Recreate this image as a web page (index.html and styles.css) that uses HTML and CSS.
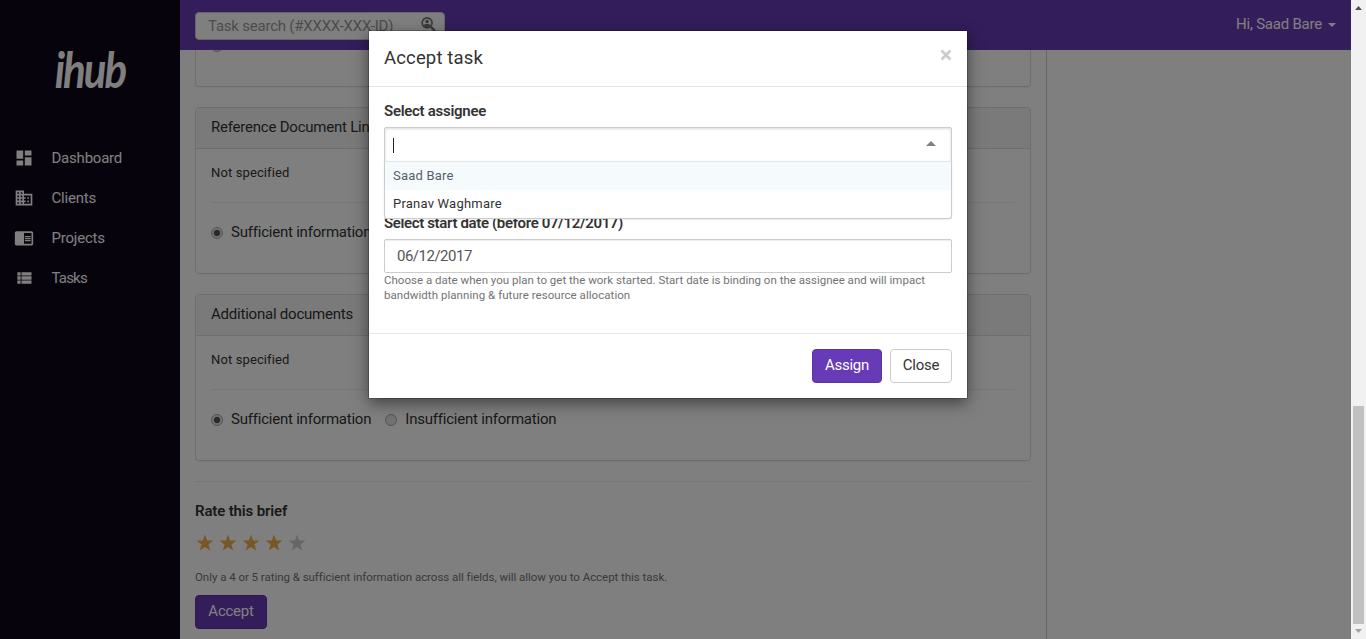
FILE: index.html
```html
<!DOCTYPE html>
<html lang="en">
<head>
<meta charset="utf-8">
<title>ihub</title>
<link rel="stylesheet" href="styles.css">
</head>
<body>
<div class="app">
  <aside class="sidebar">
    <div class="logo">ihub</div>
    <nav class="menu">
      <a class="menu-item"><svg viewBox="0 0 24 24"><path d="M3 13h8V3H3v10zm0 8h8v-6H3v6zm10 0h8V11h-8v10zm0-18v6h8V3h-8z"/></svg><span>Dashboard</span></a>
      <a class="menu-item"><svg viewBox="0 0 24 24"><path d="M12 7V3H2v18h20V7H12zM6 19H4v-2h2v2zm0-4H4v-2h2v2zm0-4H4V9h2v2zm0-4H4V5h2v2zm4 12H8v-2h2v2zm0-4H8v-2h2v2zm0-4H8V9h2v2zm0-4H8V5h2v2zm10 12h-8v-2h2v-2h-2v-2h2v-2h-2V9h8v10zm-2-8h-2v2h2v-2zm0 4h-2v2h2v-2z"/></svg><span>Clients</span></a>
      <a class="menu-item"><svg viewBox="0 0 24 24"><path d="M13 12h7v1.5h-7zm0-2.5h7V11h-7zm0 5h7V16h-7zM21 4H3c-1.1 0-2 .9-2 2v13c0 1.1.9 2 2 2h18c1.1 0 2-.9 2-2V6c0-1.1-.9-2-2-2zm0 15h-9V6h9v13z"/></svg><span>Projects</span></a>
      <a class="menu-item"><svg viewBox="0 0 24 24"><path d="M4 14h4v-4H4v4zm0 5h4v-4H4v4zM4 9h4V5H4v4zm5 5h12v-4H9v4zm0 5h12v-4H9v4zM9 5v4h12V5H9z"/></svg><span class="tight">Tasks</span></a>
    </nav>
  </aside>
  <div class="page">
    <header class="navbar">
      <div class="search"><span class="placeholder">Task search (#XXXX-XXX-ID)</span>
        <svg class="search-icon" viewBox="0 0 16 16"><circle cx="6.500" cy="6.200" r="5.300" fill="none" stroke="#777" stroke-width="1.800"/><path d="M10.500 10.500l4.300 4.200" stroke="#777" stroke-width="2.600"/><circle cx="6.500" cy="4.800" r="1.900" fill="#777"/><path d="M3 9.500c0-3 7-3 7 0l-2 1.500H5z" fill="#777"/></svg>
      </div>
      <div class="user"><span>Hi, Saad Bare</span><i class="caret"></i></div>
    </header>
    <main class="content">
      <div class="brief">
        <section class="panel panel-tail"><i class="radio"></i></section>
        <section class="panel">
          <h2 class="panel-title">Reference Document Links</h2>
          <div class="panel-body">
            <p class="value">Not specified</p>
            <div class="choices"><i class="radio checked"></i><span class="choice-label">Sufficient information</span><i class="radio"></i><span class="choice-label">Insufficient information</span></div>
          </div>
        </section>
        <section class="panel">
          <h2 class="panel-title">Additional documents</h2>
          <div class="panel-body">
            <p class="value">Not specified</p>
            <div class="choices"><i class="radio checked"></i><span class="choice-label">Sufficient information</span><i class="radio"></i><span class="choice-label">Insufficient information</span></div>
          </div>
        </section>
        <section class="rating">
          <h3 class="rate-title">Rate this brief</h3>
          <div class="stars">
            <svg viewBox="0 0 18 18"><path d="M9 .5l2.100 6.100h6.400l-5.100 3.800 1.900 6.200L9 12.900l-5.300 3.700 1.900-6.200L.5 6.600h6.400z"/></svg>
            <svg viewBox="0 0 18 18"><path d="M9 .5l2.100 6.100h6.400l-5.100 3.800 1.900 6.200L9 12.900l-5.300 3.700 1.900-6.200L.5 6.600h6.400z"/></svg>
            <svg viewBox="0 0 18 18"><path d="M9 .5l2.100 6.100h6.400l-5.100 3.800 1.900 6.200L9 12.900l-5.300 3.700 1.900-6.200L.5 6.600h6.400z"/></svg>
            <svg viewBox="0 0 18 18"><path d="M9 .5l2.100 6.100h6.400l-5.100 3.800 1.900 6.200L9 12.900l-5.300 3.700 1.900-6.200L.5 6.600h6.400z"/></svg>
            <svg class="off" viewBox="0 0 18 18"><path d="M9 .5l2.100 6.100h6.400l-5.100 3.800 1.900 6.200L9 12.900l-5.300 3.700 1.900-6.200L.5 6.600h6.400z"/></svg>
          </div>
          <p class="rate-note">Only a 4 or 5 rating &amp; sufficient information across all fields, will allow you to Accept this task.</p>
          <button class="btn btn-primary btn-accept">Accept</button>
        </section>
      </div>
    </main>
  </div>
  <div class="scrollbar">
    <svg class="arrow" viewBox="0 0 15 15"><path d="M4 10h7L7.500 6z" fill="#505050"/></svg>
    <div class="thumb"></div>
    <svg class="arrow" viewBox="0 0 15 15"><path d="M4 5h7L7.500 9z" fill="#a3a3a3"/></svg>
  </div>
</div>
<div class="backdrop">
  <div class="modal">
    <div class="modal-header"><h1 class="modal-title">Accept task</h1>
      <svg class="close" viewBox="0 0 12 12"><path d="M1.500 1.500l9 9M10.500 1.500l-9 9" stroke="#ccc" stroke-width="2.800"/></svg>
    </div>
    <div class="modal-body">
      <label class="label">Select assignee</label>
      <div class="select"><i class="cursor"></i><i class="select-arrow"></i>
        <div class="options"><div class="option focused">Saad Bare</div><div class="option">Pranav Waghmare</div></div>
      </div>
      <label class="label label-date">Select start date (before 07/12/2017)</label>
      <div class="input">06/12/2017</div>
      <p class="help">Choose a date when you plan to get the work started. Start date is binding on the assignee and will impact<br><span class="help-end">bandwidth planning &amp; future resource allocation</span></p>
    </div>
    <div class="modal-footer"><button class="btn btn-primary btn-assign">Assign</button><button class="btn btn-close">Close</button></div>
  </div>
</div>
</body>
</html>
```
FILE: styles.css
```css
* { box-sizing: border-box; }
body { margin: 0; overflow: hidden; font-family: Roboto, "Liberation Sans", sans-serif; font-size: 15px; line-height: 20px; letter-spacing: -.22px; color: #333; background: #fff; }
h1, h2, h3, p { margin: 0; font-weight: 400; }
.app { display: flex; height: 639px; }

.sidebar { width: 180px; background: #0e061a; color: #fff; }
.logo { height: 138px; padding-top: 48px; text-align: center; font: italic 700 42px/42px Lato, sans-serif; letter-spacing: -2px; transform: scaleY(1.18); transform-origin: 50% 69px; }
.menu-item { display: flex; align-items: center; height: 40px; padding-left: 14px; }
.menu-item svg { width: 20px; height: 20px; margin-right: 17.500px; fill: #fff; }
.tight { letter-spacing: -.8px; }

.page { flex: 1; display: flex; flex-direction: column; }
.navbar { display: flex; justify-content: space-between; height: 50px; padding: 12px 15px; background: #673ab7; color: #fff; }
.search { display: flex; align-items: center; justify-content: space-between; width: 250px; height: 28px; padding: 0 8px 0 12px; border: 1px solid #ccc; border-radius: 4px; background: #fff; color: #999; }
.search-icon { width: 15px; height: 15px; margin-top: -3px; }
.user { display: flex; align-items: center; height: 24px; }
.caret { margin-left: 6px; border: 4px solid transparent; border-top-color: #fff; border-bottom: 0; margin-top: 1px; }

.content { flex: 1; }
.brief { width: 867px; height: 589px; padding: 0 15px; border-right: 1px solid #ccc; overflow: hidden; }
.panel { height: 167px; margin-bottom: 20px; border: 1px solid #ddd; border-radius: 4px; box-shadow: 0 1px 1px rgba(0,0,0,.05); }
.panel-tail { height: 37px; border-top: 0; border-radius: 0 0 4px 4px; overflow: hidden; }
.panel-tail .radio { margin: -10px 0 0 15px; }
.panel-title { height: 41px; padding: 9px 15px 11px; border-bottom: 1px solid #ddd; border-radius: 3px 3px 0 0; background: #f5f5f5; font-size: 15px; line-height: 20px; }
.panel-body { padding: 14px 15px; }
.value { height: 40px; font-size: 13px; letter-spacing: .12px; border-bottom: 1px solid #eee; }
.choices { display: flex; align-items: center; margin-top: 19px; }
.radio { display: block; width: 12px; height: 12px; border: 1px solid #aaa; border-radius: 50%; background: #e4e4e4; }
.choices .radio { margin-top: 2px; }
.checked { background: radial-gradient(circle, #555 0 2.800px, #e4e4e4 3.600px); }
.choice-label { margin: 0 14px 0 8px; }
.rating { border-top: 1px solid #eee; padding-top: 19px; }
.rate-title { font-size: 15px; font-weight: 600; letter-spacing: -.14px; }
.stars { display: flex; gap: 5px; height: 18px; margin: 13px 0 0 1px; }
.stars svg { width: 18px; height: 18px; fill: #f0ad4e; }
.stars .off { fill: #ccc; }
.rate-note { margin: 15px 0 8px; font-size: 11.500px; letter-spacing: -.04px; line-height: 20px; color: #737373; }

.btn { display: block; height: 34px; padding: 0 0 2px; border: 1px solid #ccc; border-radius: 4px; background: #fff; font: 15px/20px Roboto, sans-serif; letter-spacing: -.25px; color: #333; }
.btn-primary { border-color: #5c34a4; background: #673ab7; color: #fff; }
.btn-accept { width: 72px; }
.btn-assign { width: 70px; }
.btn-close { width: 62px; }

.scrollbar { display: flex; flex-direction: column; width: 15px; background: #f1f1f1; }
.arrow { width: 15px; height: 15px; }
.thumb { width: 11px; height: 218px; margin: auto 2px 0; background: #c1c1c1; }

.backdrop { position: absolute; top: 0; left: 0; width: 1351px; height: 639px; background: rgba(0,0,0,.5); }
.modal { width: 598px; height: 367px; margin: 31px 0 0 369px; background: #fff; box-shadow: 0 5px 15px rgba(0,0,0,.5), 0 0 0 1px rgba(0,0,0,.2); }
.modal-header { display: flex; justify-content: space-between; height: 56px; padding: 15px; border-bottom: 1px solid #e5e5e5; }
.modal-title { font-size: 18.500px; line-height: 24px; letter-spacing: .15px; }
.close { width: 12px; height: 12px; margin-top: 3px; }
.modal-body { height: 246px; padding: 14px 15px; }
.label { display: block; height: 20px; font-weight: 600; letter-spacing: -.28px; }
.select { position: relative; display: flex; align-items: center; justify-content: space-between; height: 36px; margin-top: 6px; padding: 0 15px 0 8px; border: 1px solid #ccc; border-radius: 2px 2px 0 0; box-shadow: inset 0 1px 3px rgba(0,0,0,.15); }
.cursor { width: 1px; height: 15px; background: #222; margin-top: 1px; }
.select-arrow { border: 5px solid transparent; border-bottom-color: #808080; border-top: 0; margin-top: -3px; }
.options { position: absolute; top: 33px; left: -1px; width: 568px; height: 58px; border: 1px solid #ccc; border-top-color: #e6e6e6; border-radius: 0 0 3px 3px; background: #fff; box-shadow: 0 1px 2px rgba(0,0,0,.08); }
.option { height: 28px; padding: 4px 8px; font-size: 13px; letter-spacing: .21px; line-height: 20px; }
.focused { background: #f5fafd; color: #55606b; }
.label-date { margin-top: 50px; letter-spacing: -.36px; }
.input { height: 34px; margin-top: 6px; padding: 6px 12px; border: 1px solid #ccc; border-radius: 2px; box-shadow: inset 0 1px 1px rgba(0,0,0,.075); letter-spacing: -.5px; color: #555; }
.help { font-size: 11.500px; letter-spacing: .01px; line-height: 15px; color: #737373; white-space: nowrap; }
.help-end { letter-spacing: .05px; }
.modal-footer { display: flex; justify-content: flex-end; gap: 8px; padding: 15px; border-top: 1px solid #e5e5e5; }
```
